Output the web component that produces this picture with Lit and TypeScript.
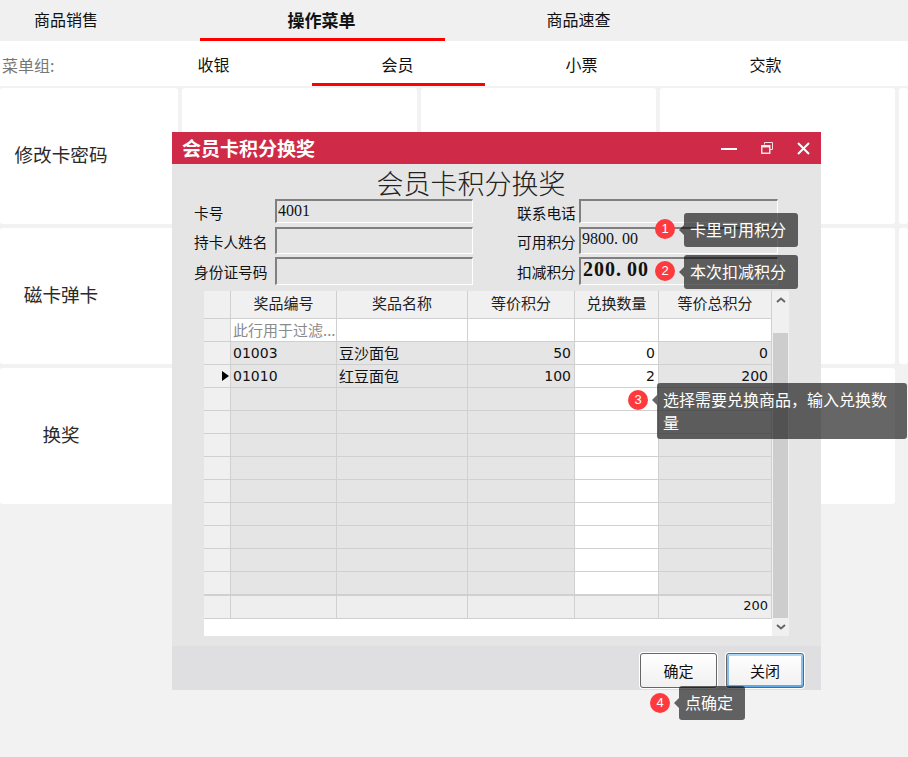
import { LitElement, html, css } from "lit";
import { customElement } from "lit/decorators.js";

const TOP = ["商品销售", "操作菜单", "商品速查"];
const SUB = ["收银", "会员", "小票", "交款"];
const CARDS = [
  ["修改卡密码", "", "", "", ""],
  ["磁卡弹卡", "", "", "", ""],
];
const COLS = ["奖品编号", "奖品名称", "等价积分", "兑换数量", "等价总积分"];
const ROWS = [
  ["01003", "豆沙面包", "50", "0", "0"],
  ["01010", "红豆面包", "100", "2", "200"],
  ...Array.from({ length: 9 }, () => ["", "", "", "", ""]),
];
const NOTES = [
  { n: 1, text: "卡里可用积分", bx: 655, by: 219, x: 684, y: 213, w: 114, h: 34 },
  { n: 2, text: "本次扣减积分", bx: 655, by: 261, x: 684, y: 255, w: 114, h: 34 },
  { n: 3, text: "选择需要兑换商品，输入兑换数量", bx: 628, by: 390, x: 657, y: 383, w: 250, h: 56 },
  { n: 4, text: "点确定", bx: 650, by: 693, x: 679, y: 686, w: 66, h: 34 },
];

@customElement("app-root")
export class AppRoot extends LitElement {
  static styles = css`
    :host {
      display: block;
      position: relative;
      width: 908px;
      height: 757px;
      overflow: hidden;
      background: #f2f2f2;
      font-family: "Noto Sans CJK SC", "Noto Sans", sans-serif;
      color: #111;
    }
    .top {
      display: flex;
      height: 41px;
      background: #f0f0f0;
      font-size: 16px;
    }
    .top div {
      width: 245px;
      margin-right: 11px;
      display: flex;
      align-items: center;
      justify-content: center;
      box-sizing: border-box;
      padding-bottom: 3px;
    }
    .top div:first-child {
      width: 132px;
      margin-right: 68px;
    }
    .top .on {
      font-weight: 700;
      font-size: 17px;
      border-bottom: 3px solid #ff0000;
      padding: 0 2px 0 0;
    }
    .sub {
      display: flex;
      height: 45px;
      background: #fff;
      font-size: 16px;
      margin-bottom: 2px;
    }
    .sub .label {
      width: 128px;
      padding: 2px 0 0 2px;
      box-sizing: border-box;
      color: #777;
      display: flex;
      align-items: center;
    }
    .sub .tab {
      width: 173px;
      margin-right: 11px;
      display: flex;
      align-items: center;
      justify-content: center;
      box-sizing: border-box;
      padding: 4px 2px 0 0;
      border-bottom: 3px solid transparent;
    }
    .sub .tab.on {
      border-bottom-color: #ff0000;
    }
    .cards {
      display: grid;
      grid-template-columns: 178px 235px 235px 235px 9px;
      grid-template-rows: 136px 136px 136px;
      gap: 4px;
    }
    .card {
      background: #fff;
      border-radius: 3px;
      font-size: 18.6px;
      color: #2a2a2a;
      display: flex;
      align-items: center;
      justify-content: center;
      padding: 0 56px 5px 0;
      box-sizing: border-box;
    }
    .card.plain {
      padding: 0;
    }
    .card.wide {
      grid-column: 1 / 5;
      justify-content: flex-start;
      padding: 0 0 5px;
    }
    .card.wide span {
      width: 122px;
      text-align: center;
    }

    .dialog {
      position: absolute;
      left: 172px;
      top: 132px;
      width: 649px;
      height: 558px;
      display: flex;
      flex-direction: column;
      background: #e5e5e5;
    }
    .bar {
      height: 32px;
      flex: none;
      background: #cf2a47;
      color: #fff;
      display: flex;
      align-items: center;
      padding: 0 11px 0 10px;
    }
    .bar b {
      font-size: 19px;
      font-weight: 700;
      flex: 1;
      line-height: 32px;
    }
    .bar svg {
      display: block;
    }
    .bar .icons {
      display: flex;
      gap: 24px;
      align-items: center;
    }
    .body {
      flex: 1;
      padding: 0 0 10px 32px;
      display: flex;
      flex-direction: column;
    }
    .heading {
      height: 35px;
      line-height: 38px;
      font-size: 27px;
      font-weight: 300;
      text-align: center;
      width: 534px;
      color: #222;
      white-space: nowrap;
    }
    .form {
      display: grid;
      margin-left: -10px;
      grid-template-columns: 81px 198px 44px 62px 199px;
      grid-template-rows: 25px 27px 28px;
      row-gap: 3px;
      margin-bottom: 6px;
      font-size: 14.7px;
    }
    .form .lb {
      display: flex;
      align-items: center;
      white-space: nowrap;
      padding-top: 1px;
    }
    .form .spacer {
      grid-column: 3;
    }
    .field {
      box-sizing: border-box;
      border-style: solid;
      border-width: 2px 1px 1px 2px;
      border-color: #808080 #fff #fff #808080;
      font-family: "Liberation Serif", serif;
      font-size: 16px;
      line-height: 20px;
      padding-left: 1px;
      white-space: nowrap;
      overflow: hidden;
    }
    .field.first {
      height: 24px;
    }
    .field.strong {
      font-size: 20px;
      font-weight: 700;
      letter-spacing: 1px;
      line-height: 21px;
      padding-left: 2px;
    }
    .dot {
      letter-spacing: 4px;
    }
    .strong .dot {
      letter-spacing: 6px;
    }
    .gridwrap {
      display: flex;
      width: 585px;
      height: 345px;
      background: #fff;
    }
    .table {
      width: 568px;
      display: grid;
      grid-template-columns: 27px 106px 131px 107px 84px 113px;
      grid-template-rows: 28px 23px repeat(11, 23px) 24px;
      align-content: start;
      font-size: 15px;
    }
    .c {
      box-sizing: border-box;
      border-right: 1px solid #d0d0d0;
      border-bottom: 1px solid #d0d0d0;
      background: #e5e5e5;
      padding: 0 3px 1px 2px;
      display: flex;
      align-items: center;
      white-space: nowrap;
      overflow: hidden;
    }
    .c.head {
      background: #f0f0f0;
      justify-content: center;
      padding: 0 0 4px;
      color: #222;
    }
    .c.rh {
      background: #f0f0f0;
      justify-content: flex-end;
      padding: 0;
    }
    .c.white {
      background: #fff;
    }
    .c.num {
      justify-content: flex-end;
    }
    .c.code,
    .c.num {
      font-family: "DejaVu Sans", sans-serif;
      font-size: 14px;
      padding-bottom: 0;
    }
    .c.filter {
      color: #8b8b8b;
      background: #fff;
      padding-bottom: 2px;
    }
    .c.foot {
      background: #eee;
      border-top: 1px solid #d0d0d0;
    }
    .c.foot.rh {
      background: #f0f0f0;
    }
    .c.foot.num {
      font-size: 13px;
      padding-bottom: 3px;
    }
    .tri {
      width: 0;
      height: 0;
      border-style: solid;
      border-width: 5.5px 0 5.5px 7px;
      border-color: transparent transparent transparent #000;
      margin-right: 1px;
    }
    .scroll {
      width: 17px;
      background: #f0f0f0;
      display: flex;
      flex-direction: column;
      align-items: center;
    }
    .scroll svg {
      display: block;
      flex: none;
      margin-top: 6px;
    }
    .scroll .gap {
      height: 30px;
      flex: none;
    }
    .scroll .thumb {
      width: 15px;
      height: 285px;
      flex: none;
      background: #cdcdcd;
    }
    .foot-bar {
      height: 44px;
      flex: none;
      background: #dfdfe1;
      display: flex;
      justify-content: flex-end;
      gap: 9px;
      padding: 7px 17px 0 0;
      box-sizing: border-box;
    }
    .btn {
      box-sizing: border-box;
      width: 77px;
      height: 35px;
      border: 1px solid #666;
      border-radius: 3px;
      box-shadow: 0 0 0 1px #fff;
      background: linear-gradient(#fff, #f0f0f0);
      font-size: 15px;
      display: flex;
      align-items: center;
      justify-content: center;
      color: #111;
    }
    .btn.focus {
      width: 78px;
      box-shadow: 0 0 0 1px #fff, inset 0 2px 0 #aed6f5, inset 0 -2px 0 #5fa9e6,
        inset 2px 0 0 #86bfee, inset -2px 0 0 #86bfee;
    }

    .note {
      position: absolute;
      box-sizing: border-box;
      background: rgba(0, 0, 0, 0.6);
      border-radius: 3px;
      color: #fff;
      font-size: 16px;
      line-height: 23px;
      padding: 5px 10px 5px 6px;
    }
    .note::before {
      content: "";
      position: absolute;
      left: -5px;
      top: 12px;
      border-style: solid;
      border-width: 5px 5px 5px 0;
      border-color: transparent rgba(0, 0, 0, 0.6) transparent transparent;
    }
    .badge {
      position: absolute;
      width: 20px;
      height: 20px;
      border-radius: 50%;
      background: #ff3a3f;
      color: #fff;
      font-family: "Liberation Sans", sans-serif;
      font-size: 13px;
      line-height: 20px;
      text-align: center;
    }
  `;

  private money(v: string) {
    const [a, b] = v.split(".");
    return html`${a}<span class="dot">.</span>${b}`;
  }

  render() {
    return html`
      <div class="top">
        ${TOP.map((t, i) => html`<div class=${i === 1 ? "on" : ""}>${t}</div>`)}
      </div>
      <div class="sub">
        <div class="label">菜单组:</div>
        ${SUB.map((t, i) => html`<div class="tab ${i === 1 ? "on" : ""}">${t}</div>`)}
      </div>
      <div class="cards">
        ${CARDS.map((r) =>
          r.map((t, i) => html`<div class="card ${i ? "plain" : ""}">${t}</div>`)
        )}
        <div class="card wide"><span>换奖</span></div>
      </div>

      <div class="dialog">
        <div class="bar">
          <b>会员卡积分换奖</b>
          <div class="icons">
            <svg width="16" height="16" viewBox="0 0 16 16">
              <rect x="0" y="8" width="16" height="2" fill="#fff" />
            </svg>
            <svg width="12" height="12" viewBox="0 0 12 12" fill="none" stroke="#fff" stroke-opacity="0.85">
              <path d="M3.5 2.5V0.5H11.5V7.5H9" stroke-width="1" />
              <rect x="0.75" y="3.75" width="8" height="7.5" stroke-width="1.5" />
              <path d="M1 4.5H9" stroke-width="2" />
            </svg>
            <svg width="13" height="13" viewBox="0 0 13 13" stroke="#fff" stroke-width="2">
              <path d="M1 1L12 12M12 1L1 12" />
            </svg>
          </div>
        </div>
        <div class="body">
          <div class="heading">会员卡积分换奖</div>
          <div class="form">
            <div class="lb">卡号</div>
            <div class="field first">4001</div>
            <div class="spacer"></div>
            <div class="lb">联系电话</div>
            <div class="field first"></div>

            <div class="lb">持卡人姓名</div>
            <div class="field"></div>
            <div class="spacer"></div>
            <div class="lb">可用积分</div>
            <div class="field">${this.money("9800.00")}</div>

            <div class="lb">身份证号码</div>
            <div class="field"></div>
            <div class="spacer"></div>
            <div class="lb">扣减积分</div>
            <div class="field strong">${this.money("200.00")}</div>
          </div>
          <div class="gridwrap">
            <div class="table">
              <div class="c head"></div>
              ${COLS.map((c) => html`<div class="c head">${c}</div>`)}

              <div class="c rh"></div>
              <div class="c filter">此行用于过滤...</div>
              <div class="c white"></div>
              <div class="c white"></div>
              <div class="c white"></div>
              <div class="c white"></div>

              ${ROWS.map(
                (r, i) => html`
                  <div class="c rh">${i === 1 ? html`<i class="tri"></i>` : ""}</div>
                  <div class="c code">${r[0]}</div>
                  <div class="c">${r[1]}</div>
                  <div class="c num">${r[2]}</div>
                  <div class="c num white">${r[3]}</div>
                  <div class="c num">${r[4]}</div>
                `
              )}

              <div class="c foot rh"></div>
              <div class="c foot"></div>
              <div class="c foot"></div>
              <div class="c foot"></div>
              <div class="c foot"></div>
              <div class="c foot num">200</div>
            </div>
            <div class="scroll">
              <svg width="10" height="6" viewBox="0 0 10 6" fill="none" stroke="#666" stroke-width="2">
                <path d="M1 5L5 1.5L9 5" />
              </svg>
              <div class="gap"></div>
              <div class="thumb"></div>
              <svg width="10" height="6" viewBox="0 0 10 6" fill="none" stroke="#666" stroke-width="2">
                <path d="M1 1L5 4.5L9 1" />
              </svg>
            </div>
          </div>
        </div>
        <div class="foot-bar">
          <div class="btn">确定</div>
          <div class="btn focus">关闭</div>
        </div>
      </div>

      ${NOTES.map(
        (n) => html`
          <div class="badge" style="left:${n.bx}px;top:${n.by}px">${n.n}</div>
          <div class="note" style="left:${n.x}px;top:${n.y}px;width:${n.w}px;height:${n.h}px">
            ${n.text}
          </div>
        `
      )}
    `;
  }
}
